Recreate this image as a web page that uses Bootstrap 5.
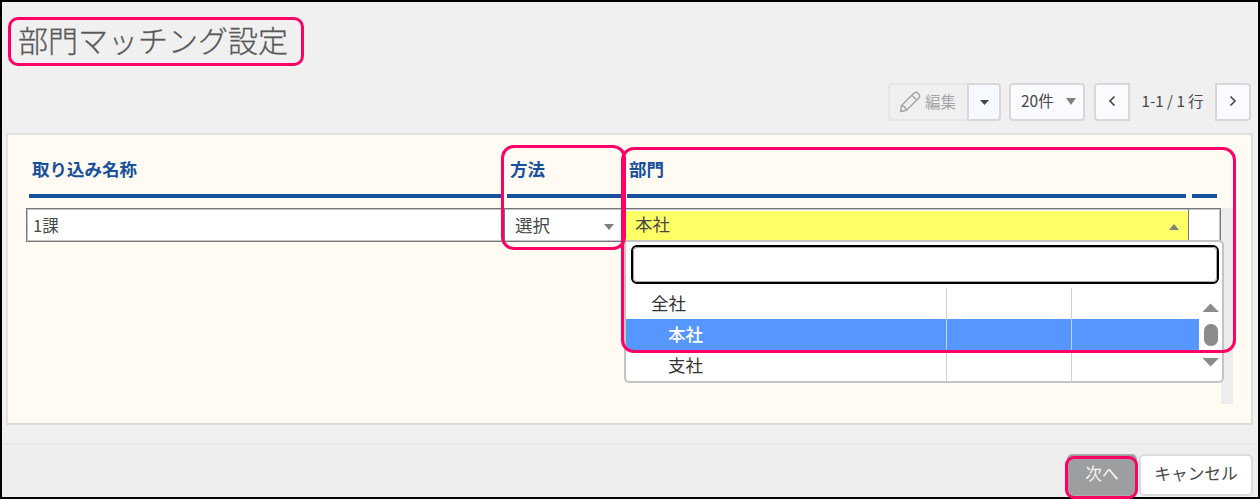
<!DOCTYPE html>
<html lang="ja">
<head>
<meta charset="utf-8">
<meta name="viewport" content="width=device-width, initial-scale=1">
<title>部門マッチング設定</title>
<link href="https://cdn.jsdelivr.net/npm/bootstrap@5.3.0/dist/css/bootstrap.min.css" rel="stylesheet">
<style>
:root{--pink:#ff0066;--navy:#17509b}
body{font-family:"Noto Sans CJK JP",sans-serif;font-size:17.5px;line-height:1.2;color:#484848;background:#000}
svg{flex-shrink:0}
.frame{width:1260px;height:499px;border:2px solid #000;background:#f0f0f0}
.page-top{height:131px;padding:15px 6px 0 6px}
.title{height:49px;width:296px;font-size:30px;font-weight:300;color:#555;-webkit-text-stroke:.3px #666;padding-left:7px;line-height:39px;border:3px solid var(--pink);border-radius:10px;white-space:nowrap}
.tools{margin-top:17px;height:38px;font-size:15.2px;padding-right:1px}
.tools .btn{height:38px;border:2px solid #d8d8da;border-radius:4px;background:#fafbff;padding:0;color:#484848;font-size:15.5px;line-height:1}
.tools .btn.edit{width:81px;margin-right:-2px;padding-right:2px;background:#f0f0f0;border-color:#e7e7e7;color:#a5a5a5;opacity:1;border-radius:4px 0 0 4px}
.tools .btn.edit-menu{width:34px;background:#f6faff;border-color:#d8d8da;border-radius:0 4px 4px 0;padding-bottom:3px}
.tools .btn.page-step{padding-bottom:6px}
.tools .btn.prev{border-radius:4px 0 0 4px}
.tools .btn.next{border-radius:0 4px 4px 0}
.panel{height:292px;margin:0 5px 0 4px;padding:25px 17px 0 18px;background:#fffaf2;border:2px solid #dcdbd9;border-left-color:#e3e3e5;border-top-color:#e0e0e0}
.heads{display:grid;grid-template-columns:472px 114px 559px 25px;column-gap:6px;margin-left:3px;height:38px;color:var(--navy);font-weight:700}
.heads>div{border-bottom:4px solid var(--navy);padding:0 3px;line-height:18px}
.cells{display:grid;grid-template-columns:477px 121px 565px 29px;height:34px;width:1195px;background:#fff;border:1px solid #77777b;box-shadow:inset 0 0 0 1px #c4c4c6;line-height:29px}
.cells>div+div{border-left:1px solid #77777b}
.dept{margin-left:-1px;background:#ff6;margin-top:2px;line-height:26px}
.scroll-track{width:12px;height:196px;background:#ededed}
.pop{position:absolute;left:-2px;top:31px;width:600px;height:143px;background:#fff;border:2px solid #c4c4c4;border-radius:0 5px 5px 5px;padding:3px 4px 0 5px;color:#333}
.search{height:39px;width:588px;border:2px solid #000;border-radius:6px;outline:1px solid #aaa;outline-offset:-3px}
.rows{margin:4px 0 0 -5px;width:573px}
.opt{display:grid;grid-template-columns:320px 125px 128px;height:31.2px;line-height:29px}
.opt>div+div{border-left:1px solid #d0d0d0}
.opt.on{background:#5696ff;color:#fff;font-weight:500}
.ring{position:absolute;border:3px solid var(--pink);border-radius:13px;pointer-events:none;z-index:5}
.foot{margin-top:18px;height:54px;border-top:2px solid #e9e9e9;background:#eee;padding:9px 5px 0 0}
.foot .btn{border-radius:5px;padding:0;font-size:16.7px;line-height:35px;padding-bottom:4px}
</style>
</head>
<body>
<div class="frame position-relative overflow-hidden">
  <header class="page-top">
    <h1 class="title m-0">部門マッチング設定</h1>
    <div class="tools d-flex justify-content-end align-items-center">
      <button class="btn edit d-flex align-items-center justify-content-center gap-1" disabled>
        <svg width="22" height="22" viewBox="0 0 22 22" fill="none" stroke="#a2a2a2" stroke-width="1.4" stroke-linejoin="round"><path d="M1.500 20.500 2.500 14.500 14.800 2.200Q17 .3 19.300 2.500T19.800 7L7.500 19.300ZM2.500 14.500Q6.500 15.500 7.500 19.300M12.800 4.200 17.800 9.100"/></svg><span>編集</span>
      </button>
      <button class="btn edit-menu"><svg width="9" height="5"><path d="M0 0H9L4.500 5Z" fill="#484848"/></svg></button>
      <button class="btn d-flex align-items-center justify-content-between" style="width:76px;margin-left:8px;padding:0 7px 2px 10px"><span>20件</span><svg width="10" height="7"><path d="M0 0H10L5 7Z" fill="#808080"/></svg></button>
      <button class="btn page-step prev" style="width:36px;margin-left:9px"><svg width="8" height="12" fill="none" stroke="#484848" stroke-width="1.7"><path d="M6.500 1.500 2 6 6.500 10.500"/></svg></button>
      <span class="text-center" style="width:85px;padding-bottom:3px">1-1 / 1 行</span>
      <button class="btn page-step next" style="width:36px"><svg width="8" height="12" fill="none" stroke="#484848" stroke-width="1.7"><path d="M1.500 1.500 6 6 1.500 10.500"/></svg></button>
    </div>
  </header>
  <main class="panel">
    <div class="heads"><div>取り込み名称</div><div>方法</div><div style="padding-left:2px">部門</div><div></div></div>
    <div class="d-flex" style="margin-top:10px">
      <div class="cells">
        <div style="padding-left:6px;font-size:16.5px;line-height:32px">1課</div>
        <div class="d-flex justify-content-between align-items-center" style="padding:0 11px 2px 10px"><span>選択</span><svg width="10" height="6" style="margin-top:5px"><path d="M0 0H10L5 6Z" fill="#808080"/></svg></div>
        <div class="position-relative" style="margin-right:2px">
          <div class="dept d-flex justify-content-between align-items-center" style="height:29px;padding:0 9px 3px 10px"><span>本社</span><svg width="10" height="6" style="margin-top:5px"><path d="M0 6H10L5 0Z" fill="#808080"/></svg></div>
          <div class="pop">
            <div class="search"></div>
            <div class="d-flex">
              <div class="rows">
                <div class="opt"><div style="padding-left:25px">全社</div><div></div><div></div></div>
                <div class="opt on"><div style="padding-left:42px">本社</div><div></div><div></div></div>
                <div class="opt"><div style="padding-left:42px">支社</div><div></div><div></div></div>
              </div>
              <svg width="22" height="92" style="margin:4px 0 0 0"><path d="M3.500 24 11.500 15.500 20 24ZM3.500 70H20L11.500 78.500Z" fill="#8b8b8b"/><rect x="5" y="36" width="14" height="22" rx="6.500" fill="#8b8b8b"/></svg>
            </div>
          </div>
        </div>
        <div style="margin-left:-2px;margin-right:-2px"></div>
      </div>
      <div class="scroll-track"></div>
    </div>
  </main>
  <footer class="foot d-flex justify-content-end">
    <button class="btn" style="width:70px;height:42px;background:#9c9ea0;color:#f4f4f4;border:1px solid #aaa;margin-right:2px">次へ</button>
    <button class="btn" style="width:114px;height:42px;background:#fff;border:2px solid #dadada;color:#484848">キャンセル</button>
  </footer>
</div>
<div class="ring" style="left:501px;top:145px;width:125px;height:105px"></div>
<div class="ring" style="left:621px;top:147px;width:615px;height:206px"></div>
<div class="ring" style="left:1065px;top:456px;width:73px;height:43px;border-radius:9px"></div>
<script src="https://cdn.jsdelivr.net/npm/bootstrap@5.3.0/dist/js/bootstrap.bundle.min.js"></script>
</body>
</html>
